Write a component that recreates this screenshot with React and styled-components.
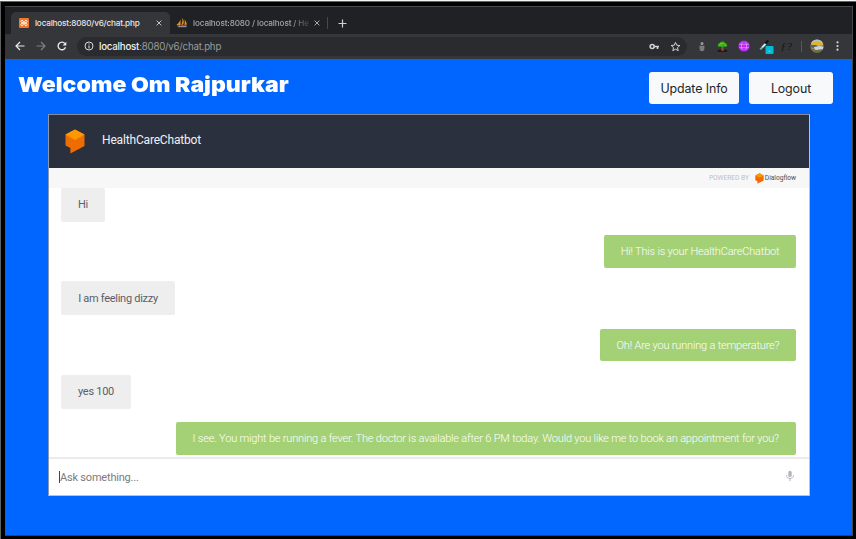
import React from "react";
import styled, { createGlobalStyle } from "styled-components";

const GlobalStyle = createGlobalStyle`
  * { box-sizing: border-box; }
  html, body { margin: 0; padding: 0; background: #fff; overflow: hidden; }
  svg { display: block; flex: none; }
`;

const Frame = styled.div`
  width: 856px;
  height: 539px;
  padding: 1px 0 0 1px;
  background: #5f6262;
  border-top: 1px solid #f4f5f5;
`;
const Bezel = styled.div`
  width: 855px;
  height: 537px;
  background: #000;
  padding: 4px 3px 3px 4px;
`;
const Browser = styled.div`
  width: 848px;
  height: 530px;
  border-top: 1px solid #48494b;
  border-right: 1px solid #45474a;
  border-bottom: 1px solid #34415a;
  display: flex;
  flex-direction: column;
  font-family: Inter, "Liberation Sans", sans-serif;
`;

const TabStrip = styled.div`
  height: 27px;
  background: #202124;
  display: flex;
  align-items: flex-end;
  padding-left: 6px;
`;
const Tab = styled.div`
  width: ${(p) => p.$width}px;
  height: 22px;
  border-radius: 5px 5px 0 0;
  background: ${(p) => (p.$active ? "#35363a" : "transparent")};
  color: ${(p) => (p.$active ? "#e4e5e7" : "#a3a6aa")};
  display: flex;
  align-items: center;
  padding: 0 0 1px ${(p) => p.$inset}px;
  gap: ${(p) => p.$gap}px;
`;
const TabTitle = styled.span`
  width: ${(p) => p.$width}px;
  white-space: nowrap;
  font-size: 8.2px;
  font-weight: 500;
  line-height: 12px;
  letter-spacing: ${(p) => p.$tracking}px;
  ${(p) => p.$fade && "mask-image: linear-gradient(90deg, #000 84%, rgba(0, 0, 0, 0.2) 100%);"}
`;
const TabDivider = styled.i`
  width: 1px;
  height: 12px;
  margin: 0 10px 5px 0;
  background: #46484b;
`;
const NewTab = styled.div`
  height: 22px;
  display: flex;
  align-items: center;
`;

const Toolbar = styled.div`
  height: 25px;
  background: #35363a;
  display: flex;
  align-items: center;
  padding: 0 0 1px 10px;
`;
const NavIcons = styled.div`
  width: 62px;
  display: flex;
  gap: 11px;
`;
const AddressBar = styled.div`
  width: 610px;
  height: 19px;
  border-radius: 10px;
  background: #292b2e;
  display: flex;
  align-items: center;
  padding: 0 6px 0 7px;
`;
const Url = styled.span`
  flex: 1;
  margin: 1px 0 0 5px;
  font-size: 9.7px;
  line-height: 14px;
  letter-spacing: -0.22px;
  color: #999c9f;
`;
const UrlHost = styled.span`
  color: #f0f1f2;
  font-weight: 500;
`;
const BarIcons = styled.div`
  display: flex;
  gap: 10px;
`;
const Extensions = styled.div`
  display: grid;
  grid-template-columns: 21px 21.5px 21.5px 23.5px 16px 14px 16px 25px;
  align-items: center;
  justify-items: center;
  padding-left: 4px;
`;
const ExtensionDivider = styled.i`
  width: 1px;
  height: 11px;
  background: #56585b;
`;

const Page = styled.main`
  flex: 1;
  background: #0066ff;
  padding: 13px 0 0 13px;
`;
const PageHeader = styled.header`
  width: 815px;
  height: 32px;
  display: flex;
  gap: 10px;
`;
const Title = styled.h1`
  flex: 1;
  margin: -1px 0 0 0;
  font-family: Inter, sans-serif;
  font-size: 20.6px;
  line-height: 27px;
  font-weight: 900;
  color: #fff;
  white-space: nowrap;
  transform: scaleX(1.117);
  transform-origin: left center;
`;
const ActionButton = styled.button`
  width: ${(p) => p.$width}px;
  height: 32px;
  padding: 0;
  border: 0;
  border-radius: 3px;
  background: #f8f9fa;
  color: #212529;
  font-family: Inter, sans-serif;
  font-size: 12.4px;
  font-weight: 400;
  letter-spacing: -0.1px;
`;

const ChatPanel = styled.section`
  width: 762px;
  height: 382px;
  margin: 10px 0 0 30px;
  border: 1px solid #9b9da4;
  border-color: #858b98 #a9c5ed #a9c5ed #8c99ad;
  background: #fff;
  display: flex;
  flex-direction: column;
  font-family: Roboto, sans-serif;
`;
const ChatHeader = styled.div`
  height: 53px;
  background: #2b303e;
  color: #f0f1f3;
  display: flex;
  align-items: center;
  padding-left: 16px;
  gap: 17px;
  font-size: 12px;
  letter-spacing: -0.17px;
`;
const BotName = styled.span`
  margin-top: -3px;
`;
const PoweredBy = styled.div`
  height: 20px;
  background: #f7f7f7;
  display: flex;
  align-items: center;
  justify-content: flex-end;
  padding-right: 13px;
  color: #bcc0c6;
  font-size: 6.6px;
`;
const Brand = styled.span`
  margin-left: 1px;
  color: #4c4e52;
  font-size: 6.7px;
  letter-spacing: -0.05px;
`;
const BrandMark = styled.span`
  margin-left: 6px;
`;
const Messages = styled.div`
  height: 269px;
  overflow: hidden;
  padding: 0 13px 0 12px;
  display: flex;
  flex-direction: column;
  gap: 13.6px;
`;
const Bubble = styled.div`
  flex: none;
  align-self: ${(p) => (p.$bot ? "flex-end" : "flex-start")};
  width: ${(p) => p.$width}px;
  height: ${(p) => (p.$bot ? 32.6 : 33.7)}px;
  border-radius: 2px;
  background: ${(p) => (p.$bot ? "#a4d176" : "#eeeeee")};
  color: ${(p) => (p.$bot ? "#ffffff" : "#595e6b")};
  display: flex;
  align-items: center;
  justify-content: center;
  white-space: nowrap;
  font-size: 11px;
  font-weight: ${(p) => (p.$bot ? 300 : 400)};
  letter-spacing: ${(p) => (p.$bot ? -0.19 : -0.28)}px;
`;
const Composer = styled.div`
  flex: 1;
  border-top: 2px solid #ebebeb;
  display: flex;
  align-items: center;
  padding: 0 14px 0 10px;
`;
const Caret = styled.i`
  width: 1px;
  height: 12px;
  background: #454545;
`;
const Placeholder = styled.span`
  flex: 1;
  font-size: 11px;
  letter-spacing: -0.2px;
  color: #7b7b7b;
`;
const MicButton = styled.span`
  margin-bottom: 2px;
`;

const DialogflowMark = ({ width, height }) => (
  <svg width={width} height={height} viewBox="0 0 20 25">
    <path d="M10 .5 19.5 5.5V17L5.4 24.5V19L.5 16.5v-11Z" fill="#ef6c00" />
    <path d="m10 .5 9.5 5L10 11 .5 5.5Z" fill="#ff9800" />
  </svg>
);
const XamppIcon = () => (
  <svg width="10" height="10" viewBox="0 0 10 10">
    <rect width="10" height="10" rx="1" fill="#f47625" />
    <path d="M4 5C1.5 5 1.4 2.3 3 2.3S4.4 5 4.4 5 4.6 7.7 3 7.7 1.5 5 4 5h2c2.5 0 2.6-2.7 1-2.7S5.6 5 5.6 5 5.4 7.7 7 7.7 8.5 5 6 5" fill="none" stroke="#fff" strokeWidth=".9" />
  </svg>
);
const PhpMyAdminIcon = () => (
  <svg width="12" height="11" viewBox="0 0 12 11">
    <path d="M4.6.6C5 3.2 3.2 5.8.5 8h4ZM6 .8c2 2 2.3 4.8 1 6.9H5.3C6.8 5 6.7 3 6 .8ZM8.3 2.6c1.7 1.7 2.4 3.3 2.4 5.1H8.3c.7-1.8.7-3.3 0-5.1Z" fill="#f0941d" />
    <path d="M.8 8.4h10.4l-.8 1.9H2.2Z" fill="#77778c" />
    <path d="M3 9.2h7" stroke="#c9c9d5" strokeWidth=".6" strokeDasharray="1.4 .7" />
  </svg>
);
const CloseIcon = ({ color }) => (
  <svg width="6" height="6" viewBox="0 0 6 6">
    <path d="m.6.6 4.8 4.8M5.4.6.6 5.4" stroke={color} />
  </svg>
);
const PlusIcon = () => (
  <svg width="9" height="9" viewBox="0 0 9 9">
    <path d="M4.5.5v8M.5 4.5h8" stroke="#cfd1d3" strokeWidth="1.2" />
  </svg>
);
const ArrowIcon = ({ color, flip }) => (
  <svg width="10" height="10" viewBox="0 0 10 10">
    <path d={flip ? "M.5 5h8.3M5 1l4 4-4 4" : "M9.5 5H1.2M5 1 1 5l4 4"} fill="none" stroke={color} strokeWidth="1.2" />
  </svg>
);
const ReloadIcon = () => (
  <svg width="10" height="10" viewBox="0 0 10 10">
    <path d="M8.5 6.2A3.8 3.8 0 1 1 7.9 2.6" fill="none" stroke="#e8eaed" strokeWidth="1.35" />
    <path d="M9.3.7v3.7H5.6Z" fill="#e8eaed" />
  </svg>
);
const InfoIcon = () => (
  <svg width="10" height="10" viewBox="0 0 10 10">
    <circle cx="5" cy="5" r="4" fill="none" stroke="#d5d7d9" />
    <path d="M5 4.4v3M5 2.4v1" stroke="#d5d7d9" strokeWidth="1.1" />
  </svg>
);
const KeyIcon = () => (
  <svg width="11" height="11" viewBox="0 0 11 11">
    <circle cx="3.2" cy="5.5" r="2" fill="none" stroke="#d0d2d4" strokeWidth="1.6" />
    <path d="M5 5.5h5M8.5 5.5V8" stroke="#d0d2d4" strokeWidth="1.6" />
  </svg>
);
const StarIcon = () => (
  <svg width="11" height="11" viewBox="0 0 11 11">
    <path d="m5.5 1.3 1.2 2.9 3.2.3-2.4 2.1.7 3.1-2.7-1.6-2.7 1.6.7-3.1-2.4-2.1 3.2-.3Z" fill="none" stroke="#d0d2d4" />
  </svg>
);
const FigureIcon = () => (
  <svg width="8" height="11" viewBox="0 0 8 11">
    <circle cx="4" cy="2.6" r="1.5" fill="#999" />
    <path d="M1.5 4.7h5l-.3 4.6-2.2 1-2.2-1Z" fill="#858585" />
    <path d="M2 6h4M2 8h4" stroke="#656565" strokeWidth=".6" />
  </svg>
);
const TreeIcon = () => (
  <svg width="11" height="11" viewBox="0 0 11 11">
    <path d="M.5 9.2 4 8.6h4l2.6.8-.7 1.3H.8Z" fill="#151713" />
    <path d="M4.8 5h1.6l.5 4.8H4.2Z" fill="#a34d22" />
    <path d="M.8 4.4C.8 2.8 2 2.3 2.6 2.1 3.3.2 7.1-.2 8.1 2c1.3 0 2.6 1.6 1.9 3.1-.7 1.3-2.3 1-3.1.4-1 .9-2.5.8-3.2.1C2.6 6.1 1 6 .8 4.4Z" fill="#3ba51a" />
    <path d="M3 2.5h4M2 4h3m2 0h2" stroke="#75d326" strokeWidth=".8" />
  </svg>
);
const GlobeIcon = () => (
  <svg width="12" height="12" viewBox="0 0 12 12">
    <circle cx="6" cy="6" r="5.5" fill="#b728f2" />
    <path d="M1 4.3h10M1 7.7h10M4.3 2C3.2 4.5 3.2 7.5 4.3 10M7.7 2c1.1 2.5 1.1 5.5 0 8" fill="none" stroke="#db91f6" strokeWidth=".8" />
  </svg>
);
const PickerIcon = () => (
  <svg width="15" height="16" viewBox="0 0 15 16">
    <path d="m1.2 11.4 5.5-5.5" stroke="#6eb1a9" strokeWidth="2" />
    <path d="m3.2 9.2 3.4-3.4" stroke="#e6efef" strokeWidth="1.5" />
    <path d="m6.3 5.5 3-3" stroke="#111" strokeWidth="2" />
    <rect x="6.5" y="8" width="8" height="8" rx=".7" fill="#00bcd8" />
    <path d="M9.5 13.2h2" stroke="#90e4ee" strokeWidth=".7" />
  </svg>
);
const FunctionLabel = styled.span`
  width: 12px;
  color: #131416;
  font: italic 11px/12px "Liberation Serif", serif;
  letter-spacing: 0.5px;
`;
const AvatarIcon = () => (
  <svg width="14" height="14" viewBox="0 0 14 14">
    <clipPath id="avatar"><circle cx="7" cy="7" r="6.6" /></clipPath>
    <g clipPath="url(#avatar)">
      <path d="M0 0h14v14H0Z" fill="#918a78" />
      <path d="M0 0h14v5L8 3 0 5Z" fill="#b8bfc0" />
      <path d="M1 4.5 6 2l5 1.2 3 2.3-4 1.3-8-.2Z" fill="#ddb52b" />
      <path d="M0 6h6l2 1.5L2 9Z" fill="#536168" />
      <path d="m4 8 6-1 4 1v3H5Z" fill="#c6d5df" />
      <path d="m0 9 6 2 7-1v4H0Z" fill="#776e38" />
    </g>
  </svg>
);
const MenuIcon = () => (
  <svg width="3" height="10" viewBox="0 0 3 10" fill="#d5d7d9">
    <circle cx="1.5" cy="1.3" r="1.1" />
    <circle cx="1.5" cy="5" r="1.1" />
    <circle cx="1.5" cy="8.7" r="1.1" />
  </svg>
);
const MicIcon = () => (
  <svg width="10" height="12" viewBox="0 0 10 12">
    <rect x="3.3" y=".7" width="3.4" height="6.4" rx="1.7" fill="#b3b5be" />
    <path d="M1.5 5.3c0 4.2 7 4.2 7 0M5 8.5v2.7" fill="none" stroke="#b3b5be" strokeWidth="1" />
  </svg>
);

const messages = [
  { text: "Hi", width: 44 },
  { text: "Hi! This is your HealthCareChatbot", width: 192, bot: true },
  { text: "I am feeling dizzy", width: 114 },
  { text: "Oh! Are you running a temperature?", width: 196, bot: true },
  { text: "yes 100", width: 70 },
  {
    text: "I see. You might be running a fever. The doctor is available after 6 PM today. Would you like me to book an appointment for you?",
    width: 620.5,
    bot: true,
  },
];

export default function App() {
  return (
    <Frame>
      <GlobalStyle />
      <Bezel>
        <Browser>
          <TabStrip>
            <Tab $active $width={159} $inset={8} $gap={6}>
              <XamppIcon />
              <TabTitle $width={115} $tracking={-0.19}>localhost:8080/v6/chat.php</TabTitle>
              <CloseIcon color="#c3c5c8" />
            </Tab>
            <Tab $width={157} $inset={6} $gap={5}>
              <PhpMyAdminIcon />
              <TabTitle $width={116} $tracking={-0.14} $fade>localhost:8080 / localhost / He</TabTitle>
              <CloseIcon color="#a9acb0" />
            </Tab>
            <TabDivider />
            <NewTab><PlusIcon /></NewTab>
          </TabStrip>
          <Toolbar>
            <NavIcons>
              <ArrowIcon color="#e8eaed" />
              <ArrowIcon color="#7d8083" flip />
              <ReloadIcon />
            </NavIcons>
            <AddressBar>
              <InfoIcon />
              <Url><UrlHost>localhost</UrlHost>:8080/v6/chat.php</Url>
              <BarIcons><KeyIcon /><StarIcon /></BarIcons>
            </AddressBar>
            <Extensions>
              <FigureIcon />
              <TreeIcon />
              <GlobeIcon />
              <PickerIcon />
              <FunctionLabel>ƒ?</FunctionLabel>
              <ExtensionDivider />
              <AvatarIcon />
              <MenuIcon />
            </Extensions>
          </Toolbar>
          <Page>
            <PageHeader>
              <Title>Welcome Om Rajpurkar</Title>
              <ActionButton $width={90}>Update Info</ActionButton>
              <ActionButton $width={84}>Logout</ActionButton>
            </PageHeader>
            <ChatPanel>
              <ChatHeader>
                <DialogflowMark width={20} height={25} />
                <BotName>HealthCareChatbot</BotName>
              </ChatHeader>
              <PoweredBy>
                POWERED BY
                <BrandMark><DialogflowMark width={9} height={11} /></BrandMark>
                <Brand>Dialogflow</Brand>
              </PoweredBy>
              <Messages>
                {messages.map((m) => (
                  <Bubble key={m.text} $bot={m.bot} $width={m.width}>{m.text}</Bubble>
                ))}
              </Messages>
              <Composer>
                <Caret />
                <Placeholder>Ask something...</Placeholder>
                <MicButton><MicIcon /></MicButton>
              </Composer>
            </ChatPanel>
          </Page>
        </Browser>
      </Bezel>
    </Frame>
  );
}
